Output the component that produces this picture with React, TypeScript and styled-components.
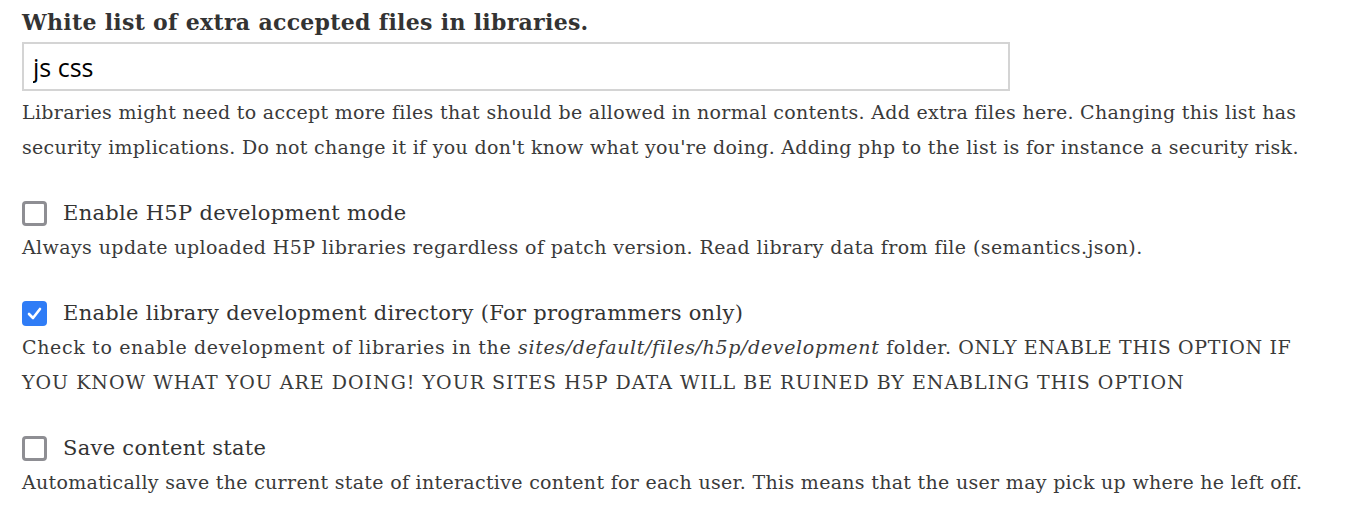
import * as React from 'react';
import styled, {createGlobalStyle} from 'styled-components';

const GlobalStyle = createGlobalStyle`
    html, body {
        margin: 0;
        padding: 0;
        background: #fff;
    }
    body {
        font-family: 'DejaVu Serif', Georgia, serif;
        color: #333;
    }
`

const Page = styled.div`
    padding: 4px 22px 0 22px;
    width: 1354px;
    box-sizing: border-box;
`

const FieldTitle = styled.div`
    font-size: 22px;
    font-weight: bold;
    letter-spacing: 0.3px;
    color: #333;
    line-height: 36px;
`

const TextInput = styled.input`
    display: block;
    box-sizing: border-box;
    width: 988px;
    height: 49px;
    margin-top: 2px;
    padding: 0 9px;
    border: 2px solid #d4d4d4;
    font-family: 'Open Sans', 'DejaVu Sans', sans-serif;
    font-size: 25px;
    color: #000;
    outline: none;
`

const Description = styled.div<{$top?: number; $spacing?: number}>`
    font-size: 19px;
    line-height: 35px;
    letter-spacing: ${p => p.$spacing ?? 0.3}px;
    color: #3a3a3a;
    margin-top: ${p => p.$top ?? 4}px;
    white-space: nowrap;
`

const Line = styled.span<{$spacing: number}>`
    letter-spacing: ${p => p.$spacing}px;
`

const Option = styled.div`
    margin-top: 33px;
`

const OptionRow = styled.label`
    display: flex;
    align-items: center;
    gap: 16px;
    height: 30px;
    font-size: 21px;
    letter-spacing: 0.3px;
    color: #333;
`

const Box = styled.span<{$checked?: boolean}>`
    display: flex;
    align-items: center;
    justify-content: center;
    box-sizing: border-box;
    width: 25px;
    height: 25px;
    border-radius: 4px;
    border: ${p => p.$checked ? 'none' : '3px solid #8e8e93'};
    background: ${p => p.$checked ? '#2f7cf6' : '#fff'};
`

const Check = () => (
    <svg width="17" height="17" viewBox="0 0 17 17">
        <path d="M3 9 L7 13 L14 4" fill="none" stroke="#fff" strokeWidth="2.6"
              strokeLinecap="round" strokeLinejoin="round"/>
    </svg>
)

interface CheckboxOptionProps {
    checked?: boolean;
    label: string;
    spacing?: number;
    children: React.ReactNode;
}

const CheckboxOption = ({checked, label, spacing, children}: CheckboxOptionProps) => (
    <Option>
        <OptionRow>
            <Box $checked={checked}>{checked && <Check/>}</Box>
            {label}
        </OptionRow>
        <Description $top={2} $spacing={spacing}>{children}</Description>
    </Option>
)

export default function App() {
    return (
        <Page>
            <GlobalStyle/>
            <FieldTitle>White list of extra accepted files in libraries.</FieldTitle>
            <TextInput defaultValue="js css"/>
            <Description>
                Libraries might need to accept more files that should be allowed in normal contents. Add extra files here. Changing this list has<br/>
                security implications. Do not change it if you don't know what you're doing. Adding php to the list is for instance a security risk.
            </Description>
            <CheckboxOption label="Enable H5P development mode" spacing={0.4}>
                Always update uploaded H5P libraries regardless of patch version. Read library data from file (semantics.json).
            </CheckboxOption>
            <CheckboxOption checked label="Enable library development directory (For programmers only)" spacing={0.65}>
                Check to enable development of libraries in the <i>sites/default/files/h5p/development</i> folder. ONLY ENABLE THIS OPTION IF<br/>
                <Line $spacing={1}>YOU KNOW WHAT YOU ARE DOING! YOUR SITES H5P DATA WILL BE RUINED BY ENABLING THIS OPTION</Line>
            </CheckboxOption>
            <CheckboxOption label="Save content state">
                Automatically save the current state of interactive content for each user. This means that the user may pick up where he left off.
            </CheckboxOption>
        </Page>
    );
}
